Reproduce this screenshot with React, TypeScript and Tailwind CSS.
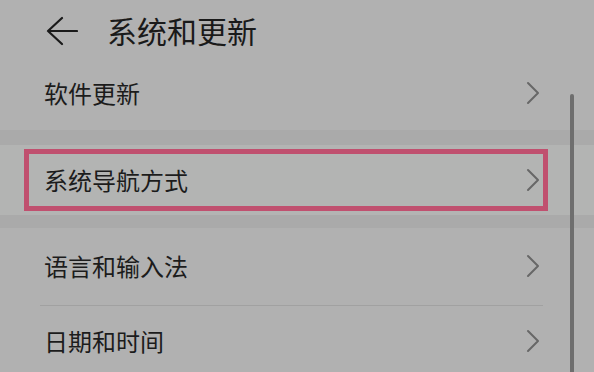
import React from "react";

const font = { fontFamily: '"Noto Sans CJK SC", "Noto Sans", sans-serif' };

function Chevron() {
  return (
    <svg width="14" height="24" viewBox="0 0 14 24" fill="none" className="shrink-0">
      <path d="M2 2 L12 12 L2 22" stroke="#676767" strokeWidth="2" strokeLinecap="round" strokeLinejoin="round" />
    </svg>
  );
}

function Row({ label, className = "" }: { label: string; className?: string }) {
  return (
    <div className={`flex items-center justify-between pl-[44px] pr-[54px] shrink-0 ${className}`}>
      <span className="text-[24px] leading-none text-[#1c1c1c]">{label}</span>
      <Chevron />
    </div>
  );
}

export default function App() {
  return (
    <div className="relative w-[594px] h-[372px] overflow-hidden bg-[#b1b1b1] flex flex-col" style={font}>
      {/* Header */}
      <div className="h-[66px] flex items-center pl-[46px] pb-[6px] shrink-0">
        <svg width="32" height="30" viewBox="0 0 32 30" fill="none" className="mt-[2px]">
          <path d="M16 2 L2 15 L16 28 M2 15 L31 15" stroke="#1a1a1a" strokeWidth="2.2" strokeLinecap="round" strokeLinejoin="round" />
        </svg>
        <span className="ml-[29px] text-[30px] leading-none text-[#1a1a1a]">系统和更新</span>
      </div>

      <Row label="软件更新" className="h-[64px] pb-[11px]" />

      <div className="h-[15px] shrink-0 bg-[#aaaaaa]" />

      {/* Highlighted row */}
      <div className="h-[70px] shrink-0 bg-[#b3b4b3] pl-[24px] pr-[46px] py-[4px]">
        <div className="h-full border-[5px] border-[#c0506f] flex items-center justify-between pl-[15px] pr-[3px]">
          <span className="text-[24px] leading-none text-[#1c1c1c]">系统导航方式</span>
          <Chevron />
        </div>
      </div>

      <div className="h-[13px] shrink-0 bg-[#aaaaaa]" />

      <Row label="语言和输入法" className="h-[77px] pb-[2px]" />
      <div className="ml-[40px] mr-[51px] h-px bg-[#a1a1a1] shrink-0" />
      <Row label="日期和时间" className="h-[74px] pb-[5px]" />

      {/* Scrollbar */}
      <div className="absolute left-[570px] top-[94px] w-[4px] h-[290px] rounded-full bg-[#6e6e6e]" />
    </div>
  );
}
